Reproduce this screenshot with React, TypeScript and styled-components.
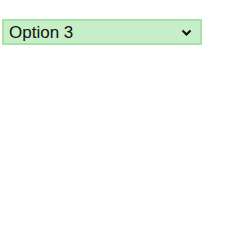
import React from "react";
import styled, { createGlobalStyle } from "styled-components";

const Global = createGlobalStyle`
  html, body { margin: 0; padding: 0; background: #ffffff; }
  body { font-family: "Liberation Sans", Arial, sans-serif; }
`;

const Page = styled.div`
  padding: 19px 0 0 2px;
`;

const Select = styled.div`
  box-sizing: border-box;
  width: 200px;
  height: 26px;
  display: flex;
  align-items: center;
  justify-content: space-between;
  padding: 0 8px 0 5px;
  background: #c6efc8;
  border: 2px solid #a8e2aa;
  color: #111111;
  font-size: 17px;
`;

const Label = styled.span`
  line-height: 1;
`;

const Chevron = styled.svg`
  width: 11px;
  height: 11px;
`;

export default function App() {
  return (
    <>
      <Global />
      <Page>
        <Select>
          <Label>Option 3</Label>
          <Chevron viewBox="0 0 11 11">
            <path d="M1.5 3.5 L5.5 7.5 L9.5 3.5" fill="none" stroke="#111" strokeWidth="2.2" />
          </Chevron>
        </Select>
      </Page>
    </>
  );
}
